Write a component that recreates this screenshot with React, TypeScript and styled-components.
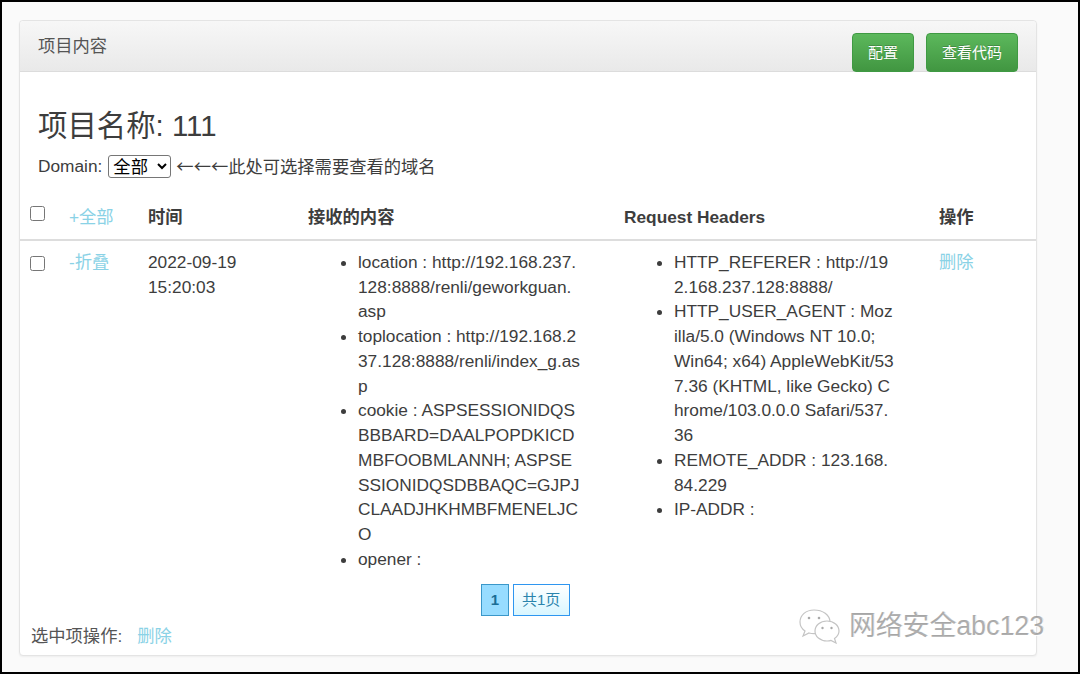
import styled, { createGlobalStyle } from "styled-components";

//style variables
const textColor = "#3d3d3d";
const linkColor = "#8ad2e6";
const fontStack = `"Liberation Sans", "Noto Sans CJK SC", sans-serif`;

const GlobalStyle = createGlobalStyle`
  html, body {
    margin: 0;
    padding: 0;
    background: #000;
  }
  body {
    font-family: ${fontStack};
    font-size: 17.3px;
    line-height: 24.75px;
    color: ${textColor};
  }
`;

const Page = styled.div`
  width: 1076px;
  height: 670px;
  margin: 2px;
  background: #fafafa;
  padding: 18px 41px 0 17px;
  box-sizing: border-box;
  overflow: hidden;
`;

const Panel = styled.section`
  position: relative;
  height: 636px;
  box-sizing: border-box;
  background: #fff;
  border: 1px solid #e4e4e4;
  border-radius: 4px;
  box-shadow: 0 1px 2px rgba(0, 0, 0, 0.05);
`;

const PanelHead = styled.header`
  display: flex;
  justify-content: space-between;
  height: 51px;
  box-sizing: border-box;
  padding: 12px 18px 0 18px;
  background: linear-gradient(#f7f7f7, #e9e9e9);
  border-bottom: 1px solid #dcdcdc;
  border-radius: 4px 4px 0 0;
  color: #555;
`;

const PanelTitle = styled.span`
  margin-top: 0.5px;
`;

const HeadButtons = styled.div`
  display: flex;
  gap: 12px;
`;

const GreenButton = styled.button<{ $width: number }>`
  width: ${(p) => p.$width}px;
  height: 39px;
  border: 1px solid #3f9a43;
  border-radius: 4px;
  background: linear-gradient(#5cb85c, #419641);
  color: #fff;
  font-family: ${fontStack};
  font-size: 15px;
  padding: 0 0 2px;
  text-shadow: 0 -1px 0 rgba(0, 0, 0, 0.2);
`;

const Body = styled.div`
  padding: 32px 0 0;
`;

const Title = styled.h1`
  margin: 0 0 0 18px;
  font-size: 29.4px;
  line-height: 44px;
  font-weight: 400;
`;

const DomainRow = styled.div`
  display: flex;
  align-items: center;
  gap: 6px;
  margin: 6px 0 0 18px;
  height: 24px;
`;

const DomainSelect = styled.select`
  width: 63px;
  height: 23px;
  font-family: ${fontStack};
  font-size: 17.3px;
  padding: 0;
  color: #000;
  background: #fff;
  border: 1px solid #767676;
  border-radius: 3px;
`;

const DomainHint = styled.span`
  margin-left: -1px;
  font-family: "Noto Sans CJK SC", sans-serif;
`;

const Table = styled.table`
  width: 100%;
  margin-top: 19px;
  border-collapse: collapse;
  table-layout: fixed;
`;

const HeadCell = styled.th`
  padding: 8px 8px 9px;
  height: 24.6px;
  text-align: left;
  font-weight: 700;
  border-bottom: 2px solid #ddd;
  vertical-align: middle;
`;

const Cell = styled.td`
  padding: 9px 8px 0;
  vertical-align: top;
`;

const CheckCell = styled(Cell)`
  padding-left: 9px;
`;

const CheckHead = styled(HeadCell)`
  padding-left: 9px;
`;

const Check = styled.input.attrs({ type: "checkbox" })<{ $top: number }>`
  display: block;
  width: 15px;
  height: 15px;
  margin: ${(p) => p.$top}px 0 0 1px;
  accent-color: #666;
`;

const Link = styled.a`
  color: ${linkColor};
  font-weight: 400;
  text-decoration: none;
`;

const InfoList = styled.ul<{ $right: number }>`
  margin: 0;
  padding: 0 ${(p) => p.$right}px 0 50px;
  word-break: break-all;
`;

const Pager = styled.nav`
  display: flex;
  justify-content: center;
  gap: 4px;
  margin: 12px 5px 0 0;
`;

const PageItem = styled.span<{ $active?: boolean }>`
  box-sizing: border-box;
  height: 32px;
  line-height: 30px;
  padding: 0 8.5px;
  font-size: 15px;
  font-weight: ${(p) => (p.$active ? 700 : 400)};
  color: ${(p) => (p.$active ? "#1a6d96" : "#2a84ad")};
  border: 1px solid ${(p) => (p.$active ? "#3a97c9" : "#2e96f0")};
  background: ${(p) =>
    p.$active ? "#97dcff" : "linear-gradient(#fff, #d8f6ff)"};
`;

const SelectedActions = styled.div`
  display: flex;
  gap: 15px;
  margin: 8px 0 0 11px;
  color: #555;
`;

const Watermark = styled.div`
  position: absolute;
  left: 778px;
  top: 587px;
  display: flex;
  align-items: center;
  gap: 8px;
  font-size: 26.8px;
  line-height: 36px;
  color: rgba(150, 150, 150, 0.75);
  text-shadow: 1px 1px 0 rgba(255, 255, 255, 0.9), 1px 0 0 rgba(120, 120, 120, 0.3);
  white-space: nowrap;
`;

const WechatIcon = () => (
  <svg width="43" height="36" viewBox="0 0 43 36" fill="#fff" stroke="#c4c4c4" strokeWidth="1.2">
    <path d="M16 2C8 2 2 7 2 14c0 4 2 7 5 9l-2 5 6-3c2 .6 3 .7 5 .7 1 0 2 0 3-.2-1-6 5-12 13-12-.5-6.500-7-11.500-16-11.500z" />
    <path d="M29 13c-7 0-12 4.500-12 10s5 10 12 10c1.500 0 3-.2 4-.6l5 2.600-1.500-4.500c3-2 4.500-4.500 4.500-7.500 0-5.500-5-10-12-10z" />
    <circle cx="11" cy="10" r="1.300" fill="#aaa" stroke="none" />
    <circle cx="21" cy="10" r="1.300" fill="#aaa" stroke="none" />
    <circle cx="24.500" cy="20" r="1.200" fill="#aaa" stroke="none" />
    <circle cx="33.500" cy="20" r="1.200" fill="#aaa" stroke="none" />
  </svg>
);

const App = () => {
  return (
    <>
      <GlobalStyle />
      <Page>
        <Panel>
          <PanelHead>
            <PanelTitle>项目内容</PanelTitle>
            <HeadButtons>
              <GreenButton $width={62}>配置</GreenButton>
              <GreenButton $width={92}>查看代码</GreenButton>
            </HeadButtons>
          </PanelHead>
          <Body>
            <Title>项目名称: 111</Title>
            <DomainRow>
              Domain:
              <DomainSelect defaultValue="all">
                <option value="all">全部</option>
              </DomainSelect>
              <DomainHint>←←←此处可选择需要查看的域名</DomainHint>
            </DomainRow>
            <Table>
              <colgroup>
                <col style={{ width: 41 }} />
                <col style={{ width: 79 }} />
                <col style={{ width: 160 }} />
                <col style={{ width: 316 }} />
                <col style={{ width: 315 }} />
                <col />
              </colgroup>
              <thead>
                <tr>
                  <CheckHead>
                    <Check $top={-7} />
                  </CheckHead>
                  <HeadCell>
                    <Link>+全部</Link>
                  </HeadCell>
                  <HeadCell>时间</HeadCell>
                  <HeadCell>接收的内容</HeadCell>
                  <HeadCell>Request Headers</HeadCell>
                  <HeadCell>操作</HeadCell>
                </tr>
              </thead>
              <tbody>
                <tr>
                  <CheckCell>
                    <Check $top={6} />
                  </CheckCell>
                  <Cell>
                    <Link>-折叠</Link>
                  </Cell>
                  <Cell>2022-09-19 15:20:03</Cell>
                  <Cell>
                    <InfoList $right={27.5}>
                      <li>location : http://192.168.237.128:8888/renli/geworkguan.asp</li>
                      <li>toplocation : http://192.168.237.128:8888/renli/index_g.asp</li>
                      <li>cookie : ASPSESSIONIDQSBBBARD=DAALPOPDKICDMBFOOBMLANNH; ASPSESSIONIDQSDBBAQC=GJPJCLAADJHKHMBFMENELJCO</li>
                      <li>opener :</li>
                    </InfoList>
                  </Cell>
                  <Cell>
                    <InfoList $right={29}>
                      <li>HTTP_REFERER : http://192.168.237.128:8888/</li>
                      <li>HTTP_USER_AGENT : Mozilla/5.0 (Windows NT 10.0; Win64; x64) AppleWebKit/537.36 (KHTML, like Gecko) Chrome/103.0.0.0 Safari/537.36</li>
                      <li>REMOTE_ADDR : 123.168.84.229</li>
                      <li>IP-ADDR :</li>
                    </InfoList>
                  </Cell>
                  <Cell>
                    <Link>删除</Link>
                  </Cell>
                </tr>
              </tbody>
            </Table>
            <Pager>
              <PageItem $active>1</PageItem>
              <PageItem>共1页</PageItem>
            </Pager>
            <SelectedActions>
              <span>选中项操作:</span>
              <Link>删除</Link>
            </SelectedActions>
          </Body>
          <Watermark>
            <WechatIcon />
            网络安全abc123
          </Watermark>
        </Panel>
      </Page>
    </>
  );
};

export default App;
